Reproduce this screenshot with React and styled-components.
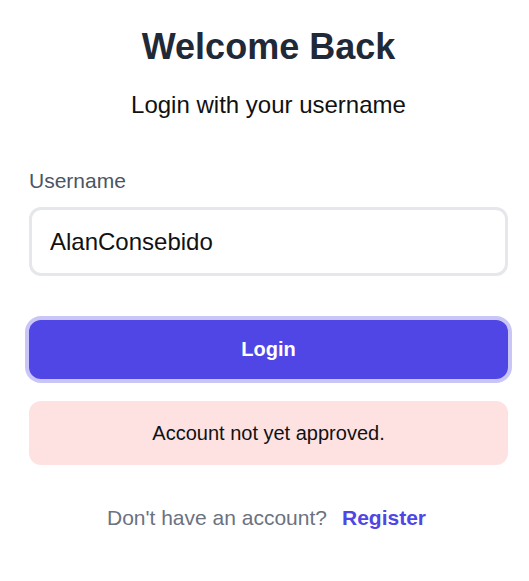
import React, { useState } from "react";
import styled, { createGlobalStyle } from "styled-components";

const GlobalStyle = createGlobalStyle`
  html, body {
    margin: 0;
    padding: 0;
    background: #ffffff;
  }
  body {
    font-family: "Liberation Sans", Arial, sans-serif;
    color: #111111;
  }
  * { box-sizing: border-box; }
`;

const Page = styled.main`
  display: flex;
  flex-direction: column;
  padding: 25px 21px 0 29px;
`;

const Title = styled.h1`
  margin: 0;
  font-size: 36px;
  line-height: 44px;
  font-weight: 700;
  color: #1f2937;
  text-align: center;
`;

const Subtitle = styled.p`
  margin: 20px 0 0;
  font-size: 24px;
  line-height: 32px;
  color: #111111;
  text-align: center;
`;

const Form = styled.form`
  display: flex;
  flex-direction: column;
  margin-top: 46px;
`;

const Label = styled.label`
  font-size: 21px;
  line-height: 28px;
  color: #4b5563;
`;

const Input = styled.input`
  margin-top: 12px;
  width: 100%;
  height: 69px;
  padding: 0 18px;
  border: 3px solid #e5e7eb;
  border-radius: 12px;
  font-family: inherit;
  font-size: 24px;
  color: #111111;
  background: #ffffff;
  outline: none;
`;

const SubmitButton = styled.button`
  margin-top: 44px;
  width: 100%;
  height: 59px;
  border: none;
  border-radius: 12px;
  background: #4f46e5;
  color: #ffffff;
  font-family: inherit;
  font-size: 20px;
  font-weight: 700;
  cursor: pointer;
  box-shadow: 0 0 0 4px #c9c6f7;
`;

const Alert = styled.div`
  margin-top: 22px;
  height: 64px;
  display: flex;
  align-items: center;
  justify-content: center;
  border-radius: 12px;
  background: #fee2e2;
  font-size: 20px;
  color: #111111;
`;

const Footer = styled.p`
  margin: 39px 0 0;
  display: flex;
  justify-content: center;
  align-items: baseline;
  font-size: 21px;
  line-height: 28px;
  color: #6b7280;
  padding-right: 4px;
`;

const RegisterLink = styled.a`
  margin-left: 15px;
  color: #4f46e5;
  font-weight: 700;
  text-decoration: none;
`;

export default function App() {
  const [username, setUsername] = useState("AlanConsebido");

  return (
    <>
      <GlobalStyle />
      <Page>
        <Title>Welcome Back</Title>
        <Subtitle>Login with your username</Subtitle>
        <Form onSubmit={(e) => e.preventDefault()}>
          <Label htmlFor="username">Username</Label>
          <Input
            id="username"
            value={username}
            onChange={(e) => setUsername(e.target.value)}
          />
          <SubmitButton type="submit">Login</SubmitButton>
        </Form>
        <Alert>Account not yet approved.</Alert>
        <Footer>
          <span>Don't have an account?</span>
          <RegisterLink href="#register">Register</RegisterLink>
        </Footer>
      </Page>
    </>
  );
}
